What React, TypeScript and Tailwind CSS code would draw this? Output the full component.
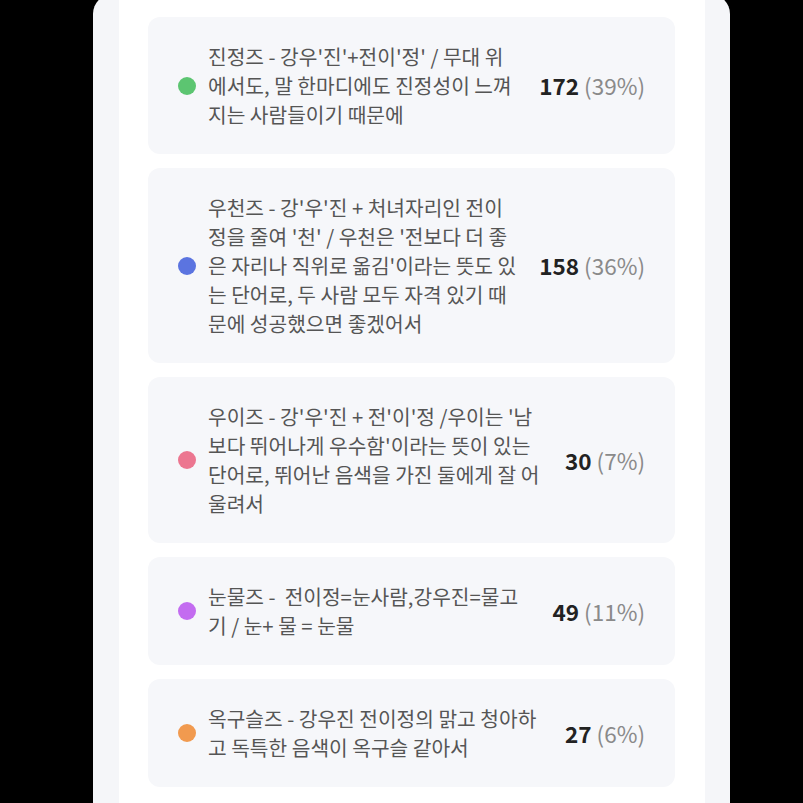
import React from "react";

type Item = { color: string; lines: string[]; count: number; pct: string };

const items: Item[] = [
  {
    color: "#5cc571",
    lines: ["진정즈 - 강우'진'+전이'정' / 무대 위", "에서도, 말 한마디에도 진정성이 느껴", "지는 사람들이기 때문에"],
    count: 172,
    pct: "39%",
  },
  {
    color: "#5b74e0",
    lines: [
      "우천즈 - 강'우'진 + 처녀자리인 전이",
      "정을 줄여 '천' / 우천은 '전보다 더 좋",
      "은 자리나 직위로 옮김'이라는 뜻도 있",
      "는 단어로, 두 사람 모두 자격 있기 때",
      "문에 성공했으면 좋겠어서",
    ],
    count: 158,
    pct: "36%",
  },
  {
    color: "#ec7690",
    lines: [
      "우이즈 - 강'우'진 + 전'이'정 /우이는 '남",
      "보다 뛰어나게 우수함'이라는 뜻이 있는",
      "단어로, 뛰어난 음색을 가진 둘에게 잘 어",
      "울려서",
    ],
    count: 30,
    pct: "7%",
  },
  {
    color: "#c36cf0",
    lines: ["눈물즈 -  전이정=눈사람,강우진=물고", "기 / 눈+ 물 = 눈물"],
    count: 49,
    pct: "11%",
  },
  {
    color: "#f19a4f",
    lines: ["옥구슬즈 - 강우진 전이정의 맑고 청아하", "고 독특한 음색이 옥구슬 같아서"],
    count: 27,
    pct: "6%",
  },
];

export default function App() {
  return (
    <div
      className="w-[803px] h-[803px] bg-black overflow-hidden"
      style={{ fontFamily: '"Noto Sans CJK KR", "Noto Sans", sans-serif' }}
    >
      <div className="ml-[93px] w-[637px] mt-[-6px] h-[809px] bg-[#f5f6f9] rounded-t-[20px] pl-[26px] pr-[25px] pt-[6px]">
        <div className="bg-white h-full pt-[17px] pl-[29px] pr-[30px] flex flex-col gap-[14px]">
          {items.map((it, i) => (
            <div
              key={i}
              className="rounded-[12px] bg-[#f6f7fa] py-[25px] pl-[30px] pr-[30px] flex items-center"
            >
              <div
                className="w-[18px] h-[18px] rounded-full shrink-0 mr-[12px]"
                style={{ backgroundColor: it.color }}
              />
              <div className="flex-1 text-[20.3px] leading-[29px] text-[#555555]">
                {it.lines.map((l, j) => (
                  <div key={j} className="whitespace-pre">
                    {l}
                  </div>
                ))}
              </div>
              <div className="shrink-0 whitespace-nowrap text-[22.5px] leading-[29px] ml-[10px]">
                <span className="font-bold text-[#222222]">{it.count}</span>
                <span className="text-[#8a8a8a]"> ({it.pct})</span>
              </div>
            </div>
          ))}
        </div>
      </div>
    </div>
  );
}
